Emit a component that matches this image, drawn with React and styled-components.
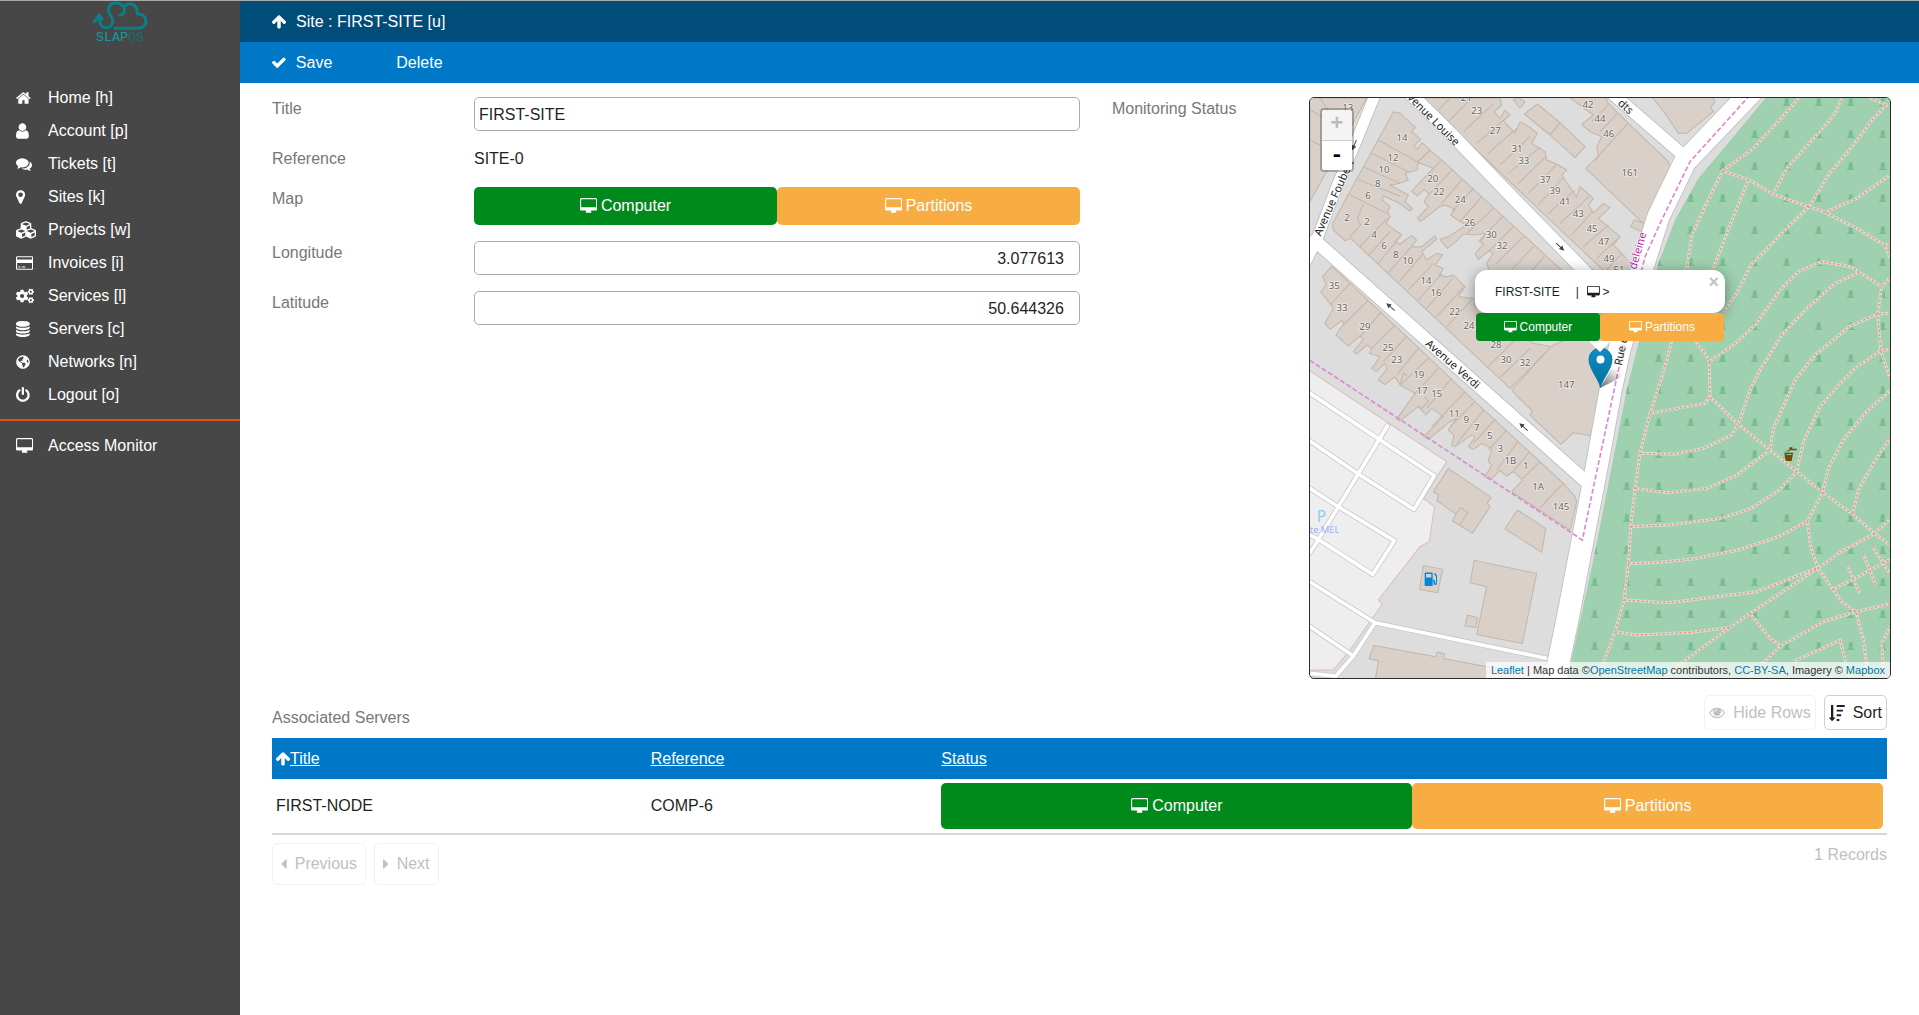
import React from "react";
import styled, { createGlobalStyle, css } from "styled-components";
import { FaCubes, FaCogs, FaGlobeAmericas } from "react-icons/fa";

const GlobalStyle = createGlobalStyle`
  *, *::before, *::after { box-sizing: border-box; }
  body {
    margin: 0;
    background: #fff;
    color: #1f1f1f;
    font-family: "Liberation Sans", Arial, Helvetica, sans-serif;
    font-size: 16px;
    line-height: 24px;
  }
  button, input { font: inherit; color: inherit; }
  a { color: inherit; text-decoration: none; }
`;

/* ---------- icons ---------- */

const GLYPHS = {
  home: ["64 0 1664 1792", "M1472 992v480q0 26-19 45t-45 19h-384v-384h-256v384h-384q-26 0-45-19t-19-45v-480q0-1 .5-3t.5-3l575-474 575 474q1 2 1 6zm223-69l-62 74q-8 9-21 11h-3q-13 0-21-7l-692-577-692 577q-12 8-24 7-13-2-21-11l-62-74q-8-10-7-23.5t11-21.5l719-599q32-26 76-26t76 26l244 204v-195q0-14 9-23t23-9h192q14 0 23 9t9 23v408l219 182q10 8 11 21.5t-7 23.5z"],
  user: ["256 0 1280 1792", "M1536 1399q0 109-62.5 187t-150.5 78h-854q-88 0-150.5-78t-62.5-187q0-85 8.5-160.5t31.5-152 58.5-131 94-89 134.5-34.5q131 128 313 128t313-128q76 0 134.5 34.5t94 89 58.5 131 31.5 152 8.5 160.5zm-256-887q0 159-112.5 271.5t-271.5 112.5-271.5-112.5-112.5-271.5 112.5-271.5 271.5-112.5 271.5 112.5 112.5 271.5z"],
  comments: ["0 0 1792 1792", "M1408 768q0 139-94 257t-256.5 186.5-353.5 68.5q-86 0-176-16-124 88-278 128-36 9-86 16h-3q-11 0-20.5-8t-11.5-21q-1-3-1-6.5t.5-6.5 2-6l2.5-5 3.5-5.5 4-5 4.5-5 4-4.5q5-6 23-25t26-29.5 22.5-29 25-38.5 20.5-44q-124-72-195-177t-71-224q0-139 94-257t256.5-186.5 353.5-68.5 353.5 68.5 256.5 186.5 94 257zm384 256q0 120-71 224.5t-195 176.5q10 24 20.5 44t25 38.5 22.5 29 26 29.5 23 25q1 1 4 4.5t4.5 5 4 5 3.5 5.5l2.5 5 2 6 .5 6.5-1 6.5q-3 14-13 22t-22 7q-50-7-86-16-154-40-278-128-90 16-176 16-271 0-472-132 58 4 88 4 161 0 309-45t264-129q125-92 192-212t67-254q0-77-23-152 129 71 204 178t75 230z"],
  marker: ["384 0 1024 1792", "M1152 640q0-106-75-181t-181-75-181 75-75 181 75 181 181 75 181-75 75-181zm256 0q0 109-33 179l-364 774q-16 33-47.5 52t-67.5 19-67.5-19-46.5-52l-365-774q-33-70-33-179 0-212 150-362t362-150 362 150 150 362z"],
  card: ["0 0 1920 1792", "M1760 128q66 0 113 47t47 113v1216q0 66-47 113t-113 47h-1600q-66 0-113-47t-47-113v-1216q0-66 47-113t113-47h1600zm-1600 128q-13 0-22.5 9.5t-9.5 22.5v224h1664v-224q0-13-9.5-22.5t-22.5-9.5h-1600zm1600 1280q13 0 22.5-9.5t9.5-22.5v-608h-1664v608q0 13 9.5 22.5t22.5 9.5h1600zm-1504-128v-128h256v128h-256zm384 0v-128h384v128h-384z"],
  database: ["128 0 1536 1792", "M896 768q237 0 443-43t325-127v170q0 69-103 128t-280 93.5-385 34.5-385-34.5-280-93.5-103-128v-170q119 84 325 127t443 43zm0 768q237 0 443-43t325-127v170q0 69-103 128t-280 93.5-385 34.5-385-34.5-280-93.5-103-128v-170q119 84 325 127t443 43zm0-384q237 0 443-43t325-127v170q0 69-103 128t-280 93.5-385 34.5-385-34.5-280-93.5-103-128v-170q119 84 325 127t443 43zm0-1152q208 0 385 34.5t280 93.5 103 128v128q0 69-103 128t-280 93.5-385 34.5-385-34.5-280-93.5-103-128v-128q0-69 103-128t280-93.5 385-34.5z"],
  power: ["128 0 1536 1792", "M1664 896q0 156-61 298t-164 245-245 164-298 61-298-61-245-164-164-245-61-298q0-182 80.5-343t226.5-270q43-32 95.5-25t83.5 50q32 42 24.5 94.5t-49.5 84.5q-98 74-151.5 181t-53.5 228q0 104 40.5 198.5t109.5 163.5 163.5 109.5 198.5 40.5 198.5-40.5 163.5-109.5 109.5-163.5 40.5-198.5q0-121-53.5-228t-151.5-181q-42-32-49.5-84.5t24.5-94.5q31-43 84-50t95 25q146 109 226.5 270t80.5 343zm-640-768v640q0 52-38 90t-90 38-90-38-38-90v-640q0-52 38-90t90-38 90 38 38 90z"],
  desktop: ["-64 0 1920 1792", "M1728 992v-832q0-13-9.5-22.5t-22.5-9.5h-1600q-13 0-22.5 9.5t-9.5 22.5v832q0 13 9.5 22.5t22.5 9.5h1600q13 0 22.5-9.5t9.5-22.5zm128-832v1088q0 66-47 113t-113 47h-544q0 37 16 77.5t32 71 16 43.5q0 26-19 45t-45 19h-512q-26 0-45-19t-19-45q0-14 16-44t32-70 16-78h-544q-66 0-113-47t-47-113v-1088q0-66 47-113t113-47h1600q66 0 113 47t47 113z"],
  arrowUp: ["117 64 1558 1664", "M1675 971q0 51-37 90l-75 75q-38 38-91 38-54 0-90-38l-294-293v704q0 52-37.5 84.5t-90.5 32.5h-128q-53 0-90.5-32.5t-37.5-84.5v-704l-294 293q-36 38-90 38t-90-38l-75-75q-38-38-38-90 0-53 38-91l651-651q35-37 90-37 54 0 91 37l651 651q37 39 37 91z"],
  check: ["121 64 1550 1792", "M1671 566q0 40-28 68l-724 724-136 136q-28 28-68 28t-68-28l-136-136-362-362q-28-28-28-68t28-68l136-136q28-28 68-28t68 28l294 295 656-657q28-28 68-28t68 28l136 136q28 28 28 68z"],
  eye: ["0 64 1792 1792", "M1664 960q-152-236-381-353 61 104 61 225 0 185-131.5 316.5t-316.5 131.5-316.5-131.5-131.5-316.5q0-121 61-225-229 117-381 353 133 205 333.5 326.5t434.5 121.5 434.5-121.5 333.5-326.5zm-720-384q0-20-14-34t-34-14q-125 0-214.5 89.5t-89.5 214.5q0 20 14 34t34 14 34-14 14-34q0-86 61-147t147-61q20 0 34-14t14-34zm848 384q0 34-20 69-140 230-376.5 368.5t-499.5 138.5-499.5-139-376.5-368q-20-35-20-69t20-69q140-229 376.5-368t499.5-139 499.5 139 376.5 368q20 35 20 69z"],
  sort: ["0 0 1792 1792", "M704 1440q0 12-10 24l-319 319q-10 9-23 9-12 0-23-9l-320-320q-15-16-7-35 8-20 30-20h192v-1376q0-14 9-23t23-9h192q14 0 23 9t9 23v1376h192q14 0 23 9t9 23zM860 0h900v220h-900zM860 520h700v220h-700zM860 1040h500v220h-500zM860 1560h300v220h-300z"],
  caretLeft: ["0 0 640 1792", "M640 448v896q0 26-19 45t-45 19-45-19l-448-448q-19-19-19-45t19-45l448-448q19-19 45-19t45 19 19 45z"],
  caretRight: ["0 0 640 1792", "M576 896q0 26-19 45l-448 448q-19 19-45 19t-45-19-19-45v-896q0-26 19-45t45-19 45 19l448 448q19 19 19 45z"],
};

const Glyph = styled.svg`
  display: block;
  flex: none;
  height: ${(p) => p.$size}px;
  fill: currentColor;
`;

function Icon({ name, size = 16 }) {
  const [box, d] = GLYPHS[name];
  return (
    <Glyph $size={size} viewBox={box} aria-hidden="true">
      <path d={d} />
    </Glyph>
  );
}

/* ---------- page frame ---------- */

const Page = styled.div`
  display: flex;
  min-height: 100vh;
  border-top: 1px solid #aaa;
`;

const Sidebar = styled.aside`
  flex: none;
  width: 240px;
  background: #474747;
  color: #fff;
`;

const LogoArea = styled.a`
  display: flex;
  justify-content: center;
  height: 80px;
`;

const LogoDrawing = styled.svg`
  width: 60px;
  height: 48px;
`;

const NavList = styled.ul`
  list-style: none;
  margin: 0;
  padding: 0 0 8px;

  & + & {
    padding-top: 8px;
    border-top: 2px solid #e8500c;
  }
`;

const NavLink = styled.a`
  display: grid;
  grid-template-columns: 32px 1fr;
  align-items: center;
  padding: 0 16px;
  line-height: 33px;
`;

const Main = styled.main`
  flex: 1;
  min-width: 0;
`;

const Bar = styled.header`
  display: flex;
  gap: 64px;
  padding: 0 32px;
  line-height: 41px;
  color: #fff;
  background: ${(p) => p.$tone};
`;

const barItem = css`
  display: flex;
  align-items: center;
  gap: 10px;
`;

const BarLink = styled.a`${barItem}`;

const BarButton = styled.button`
  ${barItem}
  padding: 0;
  border: 0;
  background: none;
`;

/* ---------- form ---------- */

const Form = styled.form`
  display: grid;
  grid-template-columns: minmax(0, 28fr) minmax(0, 27fr);
  gap: 32px;
  align-items: start;
  padding: 14px 28px 0 32px;
`;

const Fields = styled.div`
  display: flex;
  flex-direction: column;
  gap: 16px;
`;

const Field = styled.div`
  display: grid;
  grid-template-columns: minmax(0, 1fr) minmax(0, 3fr);
  column-gap: ${(p) => (p.$framed ? "3px" : "0")};
  align-items: start;
`;

const Caption = styled.label`
  color: #777;
`;

const TextBox = styled.input`
  width: 100%;
  height: 34px;
  padding: 1px ${(p) => (p.$numeric ? "15px" : "4px")} 0;
  border: 1px solid #aaa;
  border-radius: 5px;
  background: #fff;
  text-align: ${(p) => (p.$numeric ? "right" : "left")};
  appearance: textfield;

  &::-webkit-inner-spin-button { appearance: none; margin: 0; }
`;

const StatusGroup = styled.div`
  display: grid;
  grid-template-columns: 1fr 1fr;
`;

const StatusLink = styled.a`
  display: flex;
  align-items: center;
  justify-content: center;
  gap: ${(p) => (p.$small ? "3px" : "4px")};
  height: ${(p) => p.$height}px;
  border-radius: ${(p) => (p.$small ? "4px" : "5px")};
  background: ${(p) => p.$tone};
  color: #fff;
  font-size: ${(p) => (p.$small ? "12px" : "16px")};
`;

function Status({ height, small }) {
  const size = small ? 12 : 16;
  return (
    <StatusGroup>
      <StatusLink href="#computer" $tone="#008a1c" $height={height} $small={small}>
        <Icon name="desktop" size={size} />
        Computer
      </StatusLink>
      <StatusLink href="#partitions" $tone="#f8ad42" $height={height} $small={small}>
        <Icon name="desktop" size={size} />
        Partitions
      </StatusLink>
    </StatusGroup>
  );
}

/* ---------- map widget ---------- */

const MapFrame = styled.div`
  position: relative;
  aspect-ratio: 1;
  overflow: hidden;
  border: 1px solid #2b2b2b;
  border-radius: 5px;
  background: #ddd;
`;

const MapDrawing = styled.svg`
  display: block;
  width: 100%;
  height: 100%;

  text { font-family: "Noto Sans", sans-serif; }
`;

const ZoomControl = styled.div`
  position: absolute;
  top: 10px;
  left: 10px;
  width: 34px;
  overflow: hidden;
  border: 2px solid rgba(0, 0, 0, 0.25);
  border-radius: 4px;
  background-clip: padding-box;
`;

const ZoomButton = styled.button`
  display: block;
  width: 30px;
  height: 30px;
  padding: 0;
  border: 0;
  background: #fff;
  color: #000;
  font: bold 22px/30px "Liberation Mono", monospace;

  & + & { border-top: 1px solid #ccc; }
  &:disabled { background: #f4f4f4; color: #bbb; }
`;

const Pin = styled.svg`
  position: absolute;
  left: 50%;
  bottom: 50%;
  width: 45px;
  height: 41px;
  margin-left: -12px;
`;

const Popup = styled.div`
  position: absolute;
  left: 50%;
  bottom: calc(50% + 36px);
  width: 250px;
  transform: translateX(-50%);
  font-size: 12px;
`;

const Bubble = styled.div`
  display: flex;
  align-items: center;
  height: 43px;
  padding: 0 20px;
  gap: 8px;
  border-radius: 12px;
  background: #fff;
  box-shadow: 0 3px 14px rgba(0, 0, 0, 0.4);
`;

const BubbleTitle = styled.span`
  padding-right: 8px;
`;

const BubbleLink = styled.a`
  display: flex;
  align-items: center;
  gap: 3px;
`;

const CloseButton = styled.button`
  position: absolute;
  top: 0;
  right: 0;
  padding: 4px 6px 0 0;
  border: 0;
  background: none;
  color: #c3c3c3;
  font: bold 18px/16px "Liberation Sans", sans-serif;
`;

const PopupStatus = styled.div`
  position: relative;
  padding: 0 1px;
`;

const Tip = styled.div`
  width: 22px;
  height: 11px;
  margin: 0 auto;
  background: #fff;
  clip-path: polygon(0 0, 100% 0, 50% 100%);
`;

const Attribution = styled.div`
  position: absolute;
  right: 0;
  bottom: 0;
  padding: 0 5px;
  background: rgba(255, 255, 255, 0.7);
  color: #333;
  font-size: 11px;
  line-height: 16px;

  a { color: #0078a8; }
`;

const BUILDINGS = [
  "30,24 200,24 30,335",
  "280,66 298,68 346,112 335,125 362,148 340,168 352,178 366,158 390,180 385,205 352,225 352,240 315,250 325,270 300,280 270,285 325,315 315,335 337,355 330,363 290,335 250,318 248,330 270,350 262,365 270,380 258,400 305,435 285,455 300,462 335,436 350,450 335,470 365,470 405,438 410,447 365,485 380,510 410,490 428,495 405,525 430,535 418,555 440,560 460,555 495,590 475,620 520,625 525,650 620,700 700,760 755,770 630,895 152,445 135,452 100,420 98,400",
  "390,180 425,210 850,600 850,640 600,640 560,520 580,490 568,482 535,508 525,492 550,462 540,455 560,430 520,435 490,432 468,455 442,475 420,448 445,440 500,405 480,395 452,375 465,358 435,345 420,350 362,394 352,385 385,350 372,335 388,312 372,298 352,318 335,303 400,235 352,217",
  "365,24 600,24 605,45 582,65 600,85 615,60 630,75 610,92 645,130 660,95 690,112 712,130 695,160 735,185 740,210 775,225 800,240 785,255 815,300 830,320 840,290 880,325 865,345 880,370 910,340 930,352 895,385 960,440 940,465 965,490 1010,545 930,560",
  "712,42 780,98 750,135 673,72",
  "780,98 855,170 825,203 750,135",
  "640,30 655,22 675,36 660,54",
  "805,20 880,75 845,103 870,125 905,140 890,170 895,200 857,235 1035,405 1112,250 1105,215 985,100 925,40 915,20",
  "1003,390 1045,405 1028,427 992,410",
  "1055,20 1095,70 1135,130 1160,130 1240,65 1232,50 1245,38 1238,20",
  "635,900 755,768 900,700 1000,700 935,870 872,1037 820,1028 783,1063 690,975 697,962 652,920",
  "95,528 68,560 78,585 62,605 90,640 100,655 75,700 90,718 125,692 132,700 108,735 145,768 180,738 190,748 160,785 170,792 200,765 215,775 208,790 240,800 215,835 228,845 255,820 262,835 235,870 255,884 285,860 300,885 345,910 290,988 300,992 355,950 378,975 395,955 430,980 372,1040 385,1048 450,995 470,985 445,1020 462,1035 455,1065 465,1070 515,1035 525,1042 505,1070 520,1078 545,1060 575,1075 565,1115 575,1125 555,1160 570,1170 600,1142 620,1158 640,1145 668,1170 635,1205 810,1320 830,1235 825,1220 790,1180 525,935 320,740",
  "445,1135 573,1222 562,1240 570,1250 517,1330 457,1292 468,1272 410,1232 416,1215 400,1205",
  "652,1260 737,1315 725,1387 615,1316",
  "523,1411 710,1450 667,1660 530,1633 560,1490 510,1478",
  "502,1575 533,1583 527,1612 495,1608",
  "370,1426 428,1438 413,1508 359,1498",
  "222,1666 407,1700 412,1686 433,1692 430,1705 640,1745 640,1775 225,1775 235,1712 207,1706",
];

const PARTY_WALLS =
  "M235 150L355 217M215 190L325 245M190 230L300 280M173 268L300 318M150 315L262 370M190 342L172 385 182 405 150 440" +
  "M180 470L262 385M205 497L270 425M235 520L300 440M265 548L335 470M298 575L370 490M325 600L400 520M355 630L425 550M380 655L458 565M410 680L490 592M440 710L515 630M565 830L660 735M600 862L690 775" +
  "M458 238L388 312M487 268L425 340M520 295L455 365M545 320L480 395M580 355L500 430M608 380L535 455M640 410L565 485M670 440L590 520M700 470L630 545M733 500L680 560M390 180L352 217M425 210L385 250" +
  "M415 60L450 24M445 95L515 24M490 125L582 40M530 160L610 90M565 190L650 115M600 225L690 140M625 250L720 172M655 280L738 200M685 310L768 225M715 345L790 262M745 370L825 300M780 400L868 318M815 435L880 362M850 470L925 405M890 505L955 445M920 540L965 490" +
  "M983 100L880 215M953 70L900 125M925 45L875 95M30 60L100 100M30 150L60 165M60 24L130 130" +
  "M150 580L90 645M205 630L130 705M245 665L180 740M285 705L215 775M320 740L250 815M355 775L290 855M385 805L300 885M415 835L345 910M455 865L380 955M495 905L395 1010M525 935L450 1010M552 960L470 1060M585 988L520 1060M620 1020L565 1080M655 1053L590 1140M688 1085L640 1145M720 1115L668 1165M790 1180L720 1253" +
  "M482 1252L503 1267 480 1304M468 1272L482 1252M375 920L385 935 365 955 352 945M300 885L310 850 322 858";

const PARK =
  "1400,20 1275,170 1195,265 1125,390 1075,520 1030,700 980,900 880,1410 800,1775 1775,1775 1775,20";

const FOOTPATHS = [
  "1500,20 1430,100 1360,175 1267,243 1310,257 1345,268 1418,312 1525,350 1575,367 1670,415 1753,465 1770,463",
  "1627,20 1605,70 1555,130 1460,235 1423,305",
  "1705,22 1760,45 1720,85 1660,165 1585,255 1527,350 1445,430 1353,525 1310,610 1270,665",
  "1575,367 1670,325 1770,255",
  "1267,243 1215,350 1175,435 1160,540 1115,755 1083,870 1050,970 1020,1090 1005,1195 992,1310 985,1420 972,1530 945,1625 905,1730 885,1770",
  "1345,268 1280,430 1238,540 1190,760 1215,790 1227,815 1230,920",
  "1227,815 1300,765 1365,705 1440,600 1495,545 1565,515 1655,530 1678,547 1745,590 1770,562",
  "1678,547 1605,580 1520,655 1445,735 1380,840 1350,900 1315,1002",
  "1745,590 1733,670 1742,780 1770,865",
  "1770,670 1733,672 1650,708 1545,795 1485,870 1420,1015 1410,1080",
  "1770,778 1742,782 1670,830 1620,880 1560,950 1510,1055 1490,1145",
  "1753,465 1770,505",
  "1050,970 1215,940 1228,920 1315,1002 1410,1080 1490,1145 1568,1207 1658,1273 1723,1330 1770,1365",
  "1020,1090 1120,1093 1210,1075 1295,1035 1315,1002",
  "1005,1195 1100,1208 1222,1195 1310,1155 1410,1080",
  "992,1310 1110,1304 1260,1285 1350,1257 1435,1202 1490,1145",
  "985,1420 1060,1418 1180,1407 1315,1380 1435,1340 1522,1293 1568,1207 1585,1135 1630,1050 1700,965 1770,902",
  "972,1530 1105,1538 1370,1505 1553,1433",
  "945,1625 1010,1635 1170,1627 1290,1612 1350,1570 1553,1435 1615,1390 1723,1330 1770,1287",
  "1290,1612 1140,1722 1090,1770",
  "1522,1293 1532,1370 1553,1433 1598,1498 1625,1535 1668,1565 1690,1650 1705,1770",
  "1770,1045 1720,1120 1675,1200 1658,1273",
  "1598,1498 1670,1462 1770,1408",
  "1642,1425 1678,1510",
  "1690,1393 1727,1485",
  "1718,1370 1770,1452",
  "1770,1542 1668,1565 1570,1595 1443,1667 1340,1765",
  "1350,1570 1410,1645 1443,1667",
  "1480,1715 1620,1650 1650,1770",
  "1770,1610 1745,1660 1752,1770",
];

const LANES = [
  "20,903 238,1048 403,1157 342,1258 175,1152 20,1046",
  "262,1008 115,1250 45,1365 20,1400",
  "20,1189 115,1250 283,1352 218,1453 50,1345 20,1330",
  "20,1469 225,1598 745,1706",
  "225,1598 160,1698 108,1758 20,1749",
  "20,1603 160,1698",
];

const STREETS = [
  ["225,15 170,150 110,290 50,450 20,510", 32],
  ["45,452 870,1185", 38],
  ["305,-15 450,128 640,325 860,550 1010,700", 38],
  ["925,0 1160,205", 36],
  ["1365,-5 1155,215 1075,380 1025,540 958,780 932,900 890,1130 800,1600 762,1780", 66],
];

const NUMBERS = [
  ["13", 143, 52], ["14", 306, 143], ["12", 279, 203], ["10", 252, 238], ["8", 233, 281], ["6", 204, 318],
  ["2", 141, 384], ["2", 201, 394], ["4", 222, 433], ["6", 252, 467], ["8", 287, 493], ["10", 323, 512],
  ["20", 398, 266], ["22", 417, 306], ["24", 481, 328], ["26", 509, 398], ["30", 574, 435], ["32", 606, 467],
  ["21", 499, 22], ["23", 530, 62], ["27", 586, 121], ["31", 651, 175], ["33", 671, 212], ["37", 736, 268],
  ["39", 765, 301], ["41", 795, 335], ["43", 835, 371], ["45", 876, 415], ["47", 911, 455], ["49", 927, 507],
  ["51", 957, 538], ["42", 864, 43], ["44", 900, 86], ["46", 926, 131], ["161", 989, 247], ["14", 378, 573],
  ["16", 408, 608], ["22", 464, 666], ["24", 507, 707], ["28", 588, 763], ["30", 618, 809], ["32", 675, 819],
  ["35", 103, 588], ["33", 126, 652], ["29", 195, 709], ["25", 264, 772], ["23", 290, 808], ["19", 356, 854],
  ["17", 366, 901], ["15", 410, 911], ["147", 799, 884], ["11", 463, 970], ["9", 499, 990], ["7", 530, 1014],
  ["5", 569, 1037], ["3", 601, 1075], ["1B", 631, 1112], ["1", 677, 1127], ["1A", 714, 1189], ["145", 783, 1249],
];

const STREET_NAMES = [
  ["Avenue Foubert", 62, 440, -66, "#222"],
  ["Avenue Louise", 306, 10, 45, "#222"],
  ["Avenue Verdi", 374, 764, 41, "#222"],
  ["dts", 952, 42, 43, "#222"],
  ["Rue d", 965, 828, -78, "#222"],
  ["deleine", 1008, 540, -74, "#b728ab"],
];

const ONE_WAYS = [
  [780, 470, 43],
  [272, 651, 221],
  [671, 1011, 221],
  [163, 165, 112],
];

const GRAVE_STEP = 96;
const GRAVES = [];
for (let x = 884; x < 1780; x += GRAVE_STEP) {
  for (let y = 36; y < 1740; y += GRAVE_STEP) GRAVES.push([x, y]);
}

function CityMap() {
  return (
    <MapDrawing viewBox="30 24 1740 1740" preserveAspectRatio="xMidYMid slice" role="img" aria-label="Map of the site">
      <defs>
        <clipPath id="park"><polygon points={PARK} /></clipPath>
      </defs>
      <polygon points="20,836 440,1115 370,1225 403,1250 388,1355 360,1370 235,1530 247,1542 150,1680 100,1740 20,1740" fill="#eeeeee" stroke="#dcbcbc" strokeWidth="3" />
      <g fill="#d9d0c9" stroke="#c4b5a8" strokeWidth="3" strokeLinejoin="round">
        {BUILDINGS.map((points) => <polygon key={points} points={points} />)}
        <path d={PARTY_WALLS} fill="none" />
      </g>
      <polygon points={PARK} fill="#9fd0af" />
      <g clipPath="url(#park)" fill="#76bf90">
        {GRAVES.map(([x, y]) => (
          <path key={`${x}-${y}`} d={`M${x - 12} ${y + 12}v-3h4l2-5v-10q0-6 6-6t6 6v10l2 5h4v3z`} />
        ))}
      </g>
      <g fill="none" strokeLinejoin="round">
        {FOOTPATHS.map((points) => <polyline key={points} points={points} stroke="#cfe0cd" strokeWidth="9" />)}
        {FOOTPATHS.map((points) => <polyline key={points} points={points} stroke="#f98b80" strokeWidth="4" strokeDasharray="7 6" />)}
      </g>
      <g fill="none" strokeLinejoin="round" strokeLinecap="round">
        {LANES.map((points) => <polyline key={points} points={points} stroke="#c9c9c9" strokeWidth="16" />)}
        {LANES.map((points) => <polyline key={points} points={points} stroke="#fff" strokeWidth="11" />)}
        {STREETS.map(([points, width]) => <polyline key={points} points={points} stroke="#bdbdbd" strokeWidth={width + 5} />)}
        {STREETS.map(([points, width]) => <polyline key={points} points={points} stroke="#fff" strokeWidth={width} />)}
      </g>
      <polyline
        points="1350,15 1170,215 1085,390 1035,500 1025,540 955,840 870,1240 847,1350 575,1170 120,870 20,805"
        fill="none" stroke="#dc8ad0" strokeWidth="5" strokeDasharray="15 7"
      />
      <g fill="#666" fontSize="29" textAnchor="middle" stroke="#efebe7" strokeWidth="5" paintOrder="stroke">
        {NUMBERS.map(([label, x, y]) => <text key={`${x}-${y}`} x={x} y={y + 10}>{label}</text>)}
      </g>
      <g fontSize="33" stroke="#fff" strokeWidth="4" paintOrder="stroke">
        {STREET_NAMES.map(([name, x, y, angle, tone]) => (
          <text key={name} fill={tone} transform={`translate(${x} ${y}) rotate(${angle})`}>{name}</text>
        ))}
      </g>
      <g fill="#444" stroke="#444" strokeWidth="3">
        {ONE_WAYS.map(([x, y, angle]) => (
          <path key={`${x}-${y}`} d="M-16 0H6M4-5L14 0 4 5z" transform={`translate(${x} ${y}) rotate(${angle})`} />
        ))}
      </g>
      <text x="50" y="1297" fontSize="46" fill="#8fcdec">P</text>
      <text x="-5" y="1329" fontSize="28" fill="#9cb8f0">lotte MEL</text>
      <g fill="#0087dc" transform="translate(372 1446)">
        <path fillRule="evenodd" d="M2 4q0-3 3-3h18q3 0 3 3v38H2zM6 6v10h16V6z" />
        <path d="M27 22q6 0 6 6v4q3 4 3-2V14l-6-8 3-4 6 9v20q-1 11-9 6-2-2-2-10h-1z" />
      </g>
      <g fill="#734a08" transform="translate(1453 1070)">
        <path d="M0 18h26l-4 25H4zM5 22v3h16v-3z" fillRule="evenodd" />
        <path d="M10 14q1-7 9-7h-4V2h9v4h13v5H19q-4 0-5 3z" />
      </g>
    </MapDrawing>
  );
}

function SiteMap() {
  return (
    <MapFrame>
      <CityMap />
      <ZoomControl>
        <ZoomButton type="button" aria-label="Zoom in" disabled>+</ZoomButton>
        <ZoomButton type="button" aria-label="Zoom out">-</ZoomButton>
      </ZoomControl>
      <Pin viewBox="0 0 45 41" aria-hidden="true">
        <defs>
          <linearGradient id="pin" x1="0" y1="0" x2="0" y2="1">
            <stop offset="0" stopColor="#0f8fc4" />
            <stop offset="1" stopColor="#046e9c" />
          </linearGradient>
          <linearGradient id="pinShade" x1="0" y1="1" x2="1" y2="0">
            <stop offset="0" stopColor="#000" stopOpacity="0.6" />
            <stop offset="0.8" stopColor="#000" stopOpacity="0" />
          </linearGradient>
        </defs>
        <path d="M12 41L22 24q8-6 14-3 4 5-8 12z" fill="url(#pinShade)" />
        <path d="M12.5 40.5C11 32 1 22 1 12.5a11.5 11.5 0 0 1 23 0C24 22 14 32 12.5 40.5z" fill="url(#pin)" stroke="#0679ac" />
        <circle cx="12.5" cy="12.5" r="4" fill="#fff" />
      </Pin>
      <Popup>
        <Bubble>
          <BubbleTitle>FIRST-SITE</BubbleTitle>
          <span>|</span>
          <BubbleLink href="#site">
            <Icon name="desktop" size={12} />
            &gt;
          </BubbleLink>
        </Bubble>
        <CloseButton type="button" aria-label="Close popup">×</CloseButton>
        <PopupStatus><Status height={28} small /></PopupStatus>
        <Tip />
      </Popup>
      <Attribution>
        <a href="#leaflet">Leaflet</a> | Map data ©<a href="#osm">OpenStreetMap</a> contributors,{" "}
        <a href="#license">CC-BY-SA</a>, Imagery © <a href="#mapbox">Mapbox</a>
      </Attribution>
    </MapFrame>
  );
}

/* ---------- server list ---------- */

const ListSection = styled.section`
  padding: 16px 32px;
`;

const ListHeader = styled.div`
  display: flex;
  align-items: flex-end;
  justify-content: space-between;
  margin-bottom: 8px;
`;

const ListTitle = styled.h2`
  margin: 0;
  color: #777;
  font-size: 16px;
  font-weight: normal;
`;

const Actions = styled.div`
  display: flex;
  gap: 8px;
`;

const Button = styled.button`
  display: flex;
  align-items: center;
  gap: 8px;
  height: ${(p) => (p.$tall ? "42px" : "35px")};
  padding: 0 ${(p) => (p.$tall ? "8px" : "4px")};
  border: 1px solid #d0d0d0;
  border-radius: 5px;
  background: #fff;

  &:disabled { border-color: #f2f2f2; color: #c0c0c0; }
`;

const Table = styled.table`
  width: 100%;
  table-layout: fixed;
  border-collapse: collapse;
`;

const HeadCell = styled.th`
  width: ${(p) => p.$width};
  height: 41px;
  padding: 0 4px;
  background: #0078c8;
  color: #fff;
  font-weight: normal;
  text-align: left;
`;

const SortLink = styled.a`
  display: flex;
  align-items: center;
  text-decoration: underline;
`;

const Cell = styled.td`
  padding: 4px;
  border-bottom: 2px solid #d6d6d6;
`;

const ListFooter = styled.div`
  display: flex;
  align-items: flex-start;
  justify-content: space-between;
  padding-top: 8px;
`;

const Records = styled.span`
  color: #c0c0c0;
`;

const NAV = [
  ["Home [h]", <Icon name="home" />],
  ["Account [p]", <Icon name="user" size={18} />],
  ["Tickets [t]", <Icon name="comments" />],
  ["Sites [k]", <Icon name="marker" />],
  ["Projects [w]", <FaCubes size={20} />],
  ["Invoices [i]", <Icon name="card" />],
  ["Services [l]", <FaCogs size={18} />],
  ["Servers [c]", <Icon name="database" />],
  ["Networks [n]", <FaGlobeAmericas size={14} />],
  ["Logout [o]", <Icon name="power" />],
];

function Logo() {
  return (
    <LogoDrawing viewBox="270 0 180 144" role="img" aria-label="SlapOS">
      <g fill="none" stroke="#0b7f88" strokeWidth="9" strokeLinecap="round" strokeLinejoin="round">
        <path d="M283 62L298 42 306 54M299 49C292 89 340 89 338 59C336 43 325 41 325 25C328 0 362 0 373 21C376 33 368 41 360 43" />
        <path d="M373 17C386 0 414 9 412 39C444 37 448 81 414 82H345" />
      </g>
      <text x="288" y="120" fontFamily="'Liberation Mono', monospace" fontSize="40" fill="#159a9c">
        SLAP<tspan fill="#1b6a6f">OS</tspan>
      </text>
    </LogoDrawing>
  );
}

export default function App() {
  return (
    <>
      <GlobalStyle />
      <Page>
        <Sidebar>
          <LogoArea href="#top"><Logo /></LogoArea>
          <nav>
            <NavList>
              {NAV.map(([label, icon]) => (
                <li key={label}>
                  <NavLink href="#nav">{icon}{label}</NavLink>
                </li>
              ))}
            </NavList>
            <NavList>
              <li>
                <NavLink href="#monitor"><Icon name="desktop" />Access Monitor</NavLink>
              </li>
            </NavList>
          </nav>
        </Sidebar>
        <Main>
          <Bar $tone="#004d7a">
            <BarLink href="#up"><Icon name="arrowUp" size={15} />Site : FIRST-SITE [u]</BarLink>
          </Bar>
          <Bar as="div" $tone="#0078c8">
            <BarButton type="submit" form="site-form"><Icon name="check" />Save</BarButton>
            <BarButton type="button">Delete</BarButton>
          </Bar>
          <Form id="site-form">
            <Fields>
              <Field>
                <Caption htmlFor="title">Title</Caption>
                <TextBox id="title" type="text" defaultValue="FIRST-SITE" />
              </Field>
              <Field>
                <Caption as="span">Reference</Caption>
                <span>SITE-0</span>
              </Field>
              <Field>
                <Caption as="span">Map</Caption>
                <Status height={38} />
              </Field>
              <Field>
                <Caption htmlFor="longitude">Longitude</Caption>
                <TextBox id="longitude" type="number" step="any" defaultValue="3.077613" $numeric />
              </Field>
              <Field>
                <Caption htmlFor="latitude">Latitude</Caption>
                <TextBox id="latitude" type="number" step="any" defaultValue="50.644326" $numeric />
              </Field>
            </Fields>
            <Field $framed>
              <Caption as="span">Monitoring Status</Caption>
              <SiteMap />
            </Field>
          </Form>
          <ListSection>
            <ListHeader>
              <ListTitle>Associated Servers</ListTitle>
              <Actions>
                <Button type="button" disabled><Icon name="eye" />Hide Rows</Button>
                <Button type="button"><Icon name="sort" />Sort</Button>
              </Actions>
            </ListHeader>
            <Table>
              <thead>
                <tr>
                  <HeadCell scope="col" $width="23.2%">
                    <SortLink href="#title"><Icon name="arrowUp" size={15} />Title</SortLink>
                  </HeadCell>
                  <HeadCell scope="col" $width="18%"><SortLink href="#reference">Reference</SortLink></HeadCell>
                  <HeadCell scope="col"><SortLink href="#status">Status</SortLink></HeadCell>
                </tr>
              </thead>
              <tbody>
                <tr>
                  <Cell>FIRST-NODE</Cell>
                  <Cell>COMP-6</Cell>
                  <Cell><Status height={46} /></Cell>
                </tr>
              </tbody>
            </Table>
            <ListFooter>
              <Actions>
                <Button type="button" $tall disabled><Icon name="caretLeft" />Previous</Button>
                <Button type="button" $tall disabled><Icon name="caretRight" />Next</Button>
              </Actions>
              <Records>1 Records</Records>
            </ListFooter>
          </ListSection>
        </Main>
      </Page>
    </>
  );
}
